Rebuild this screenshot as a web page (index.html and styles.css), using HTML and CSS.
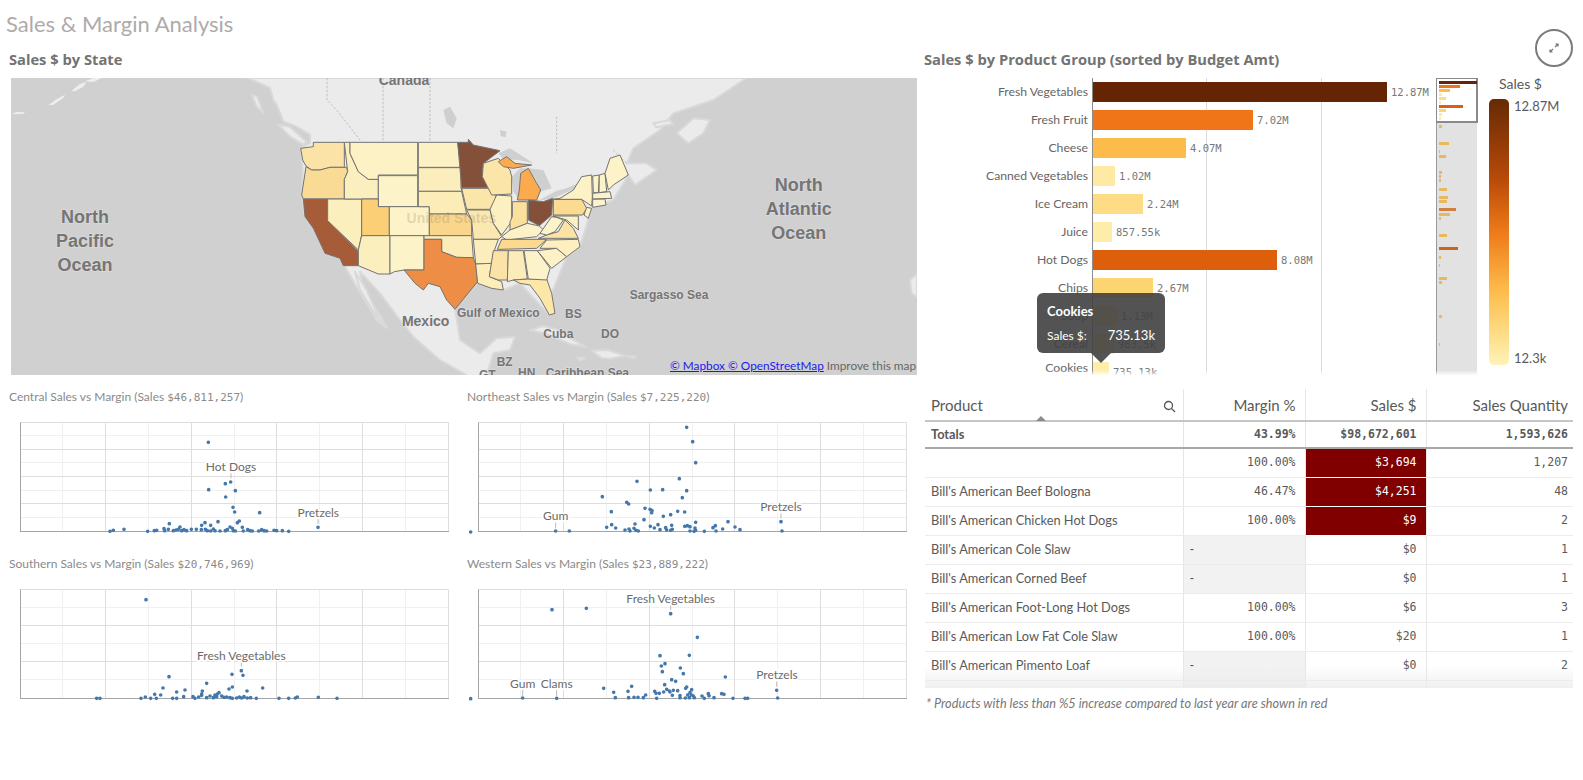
FILE: index.html
```html
<!DOCTYPE html>
<html lang="en">
<head>
    <meta charset="UTF-8">
    <title>Sales &amp; Margin Analysis</title>
    <link rel="stylesheet" href="styles.css">
</head>
<body>
<div class="page">
    <h1 class="sheet-title">Sales &amp; Margin Analysis</h1>

    <button class="expand-btn" aria-label="Expand">
        <svg width="12" height="12" viewBox="0 0 12 12"><path d="M7 5 10 2M7.5 2H10V4.5M5 7 2 10M2 7.5V10H4.5"/></svg>
    </button>

    <div class="dash">
        <!-- left column: map + scatter plots -->
        <section class="left">
            <h2 class="panel-title">Sales $ by State</h2>
            <div class="map">
                <svg class="map-svg" width="906" height="297" viewBox="-807 -126 2718 891">
                    <g class="land">
                        <path d="M-95-126-60-110-30-96-20-60-10-46 10 4 50 20 90 44 90 69 62 85 68 150 65 225 75 290 100 325 135 400 180 415 195 440 230 500 290 600 320 625 300 585 250 510 240 455 300 520 360 600 400 650 480 720 560 765 560 800 620 800 620 765 640 700 690 690 705 650 650 655 600 700 540 660 525 565 593 490 670 510 720 490 808 585 825 580 815 520 860 410 900 380 935 265 1000 240 1045 165 1065 195 1130 150 1100 130 1040 130 1060 85 1140 30 1180-20 1300-60 1400-126Z"/>
                        <path d="M1190 40 1240-5 1290 0 1270 40 1225 70Z"/>
                        <path d="M1120 10 1170 0 1180 12 1130 22Z"/>
                        <path d="M750 630 790 618 830 628 880 660 920 682 870 672 800 642Z"/>
                        <path d="M935 692 985 690 1035 708 990 716 965 714Z"/>
                        <path d="M890 712 915 714 900 722Z"/>
                        <path d="M1040 708 1068 708 1060 716Z"/>
                        <path d="M225 455 260 510 300 600 322 622 290 590 240 510Z"/>
                        <path d="M1890 480 1911 462 1911 530 1895 520Z"/>
                        <path d="M-85-76-68-70-50-21-70-40Z"/>
                        <path d="M-5 14 30 20 80 66 70 74 30 50Z"/>
                    </g>
                    <g class="islands">
                        <path d="M-805-18-790-24-765-23-770-19-790-17Z"/>
                        <path d="M-695-44-670-62-645-76-650-66-680-46Z"/>
                        <path d="M-625-88-600-108-580-114-590-100-615-86Z"/>
                        <path d="M-585-116-560-126-535-126-560-114Z"/>
                    </g>
                    <g class="lakes">
                        <path d="M655 100 690 85 760 130 715 120 670 118Z"/>
                        <path d="M695 170 720 145 745 145 725 170 715 235 700 215Z"/>
                        <path d="M745 145 790 150 815 205 780 215 770 185Z"/>
                        <path d="M775 242 830 212 862 205 870 212 820 235Z"/>
                        <path d="M845 210 900 188 905 198 860 215Z"/>
                        <path d="M490-30 510-40 530-5 520 25 500 10Z"/>
                        <path d="M660 30 680 35 676 52 662 48Z"/>
                    </g>
                    <path class="borders" d="M141-126V-60L170-30 240 60V67M309-126V67M450-126V67M830-10V100M1000 90 1040 130"/>
                    <g class="states">
                        <path fill="#fbe3a8" d="M62 85 100 80V67H193V142H150L120 150H95L78 138 68 120Z"/>
                        <path fill="#fadb96" d="M78 140 95 150H120L150 142H200L203 155 193 178V237H70L65 225Z"/>
                        <path fill="#a65c38" d="M70 237H143V302L240 400 235 437H190L180 415 135 400 100 325 75 290Z"/>
                        <path fill="#fcefbe" d="M143 237H245V345L235 390 143 302Z"/>
                        <path fill="#fbefc0" d="M193 67H210V100L235 155 265 178H295V237H193V178L203 155Z"/>
                        <path fill="#fcf2c6" d="M210 67H413V165H295V178H265L235 155 210 100Z"/>
                        <path fill="#fdf3c8" d="M295 167H413V260H295Z"/>
                        <path fill="#fbcf76" d="M245 237H295V260H328V347H245Z"/>
                        <path fill="#fdf2c8" d="M328 260H448V347H328Z"/>
                        <path fill="#fcefbe" d="M235 390 245 347H330V462H295L235 437Z"/>
                        <path fill="#fdf3c8" d="M330 347H432V450H372L343 455 330 462Z"/>
                        <path fill="#fcf1c4" d="M415 67H533L543 142H415Z"/>
                        <path fill="#fbeebc" d="M415 143H543V205L547 214H415Z"/>
                        <path fill="#fbecb8" d="M415 214H545L560 282H448V260H415Z"/>
                        <path fill="#fad68c" d="M448 282H560L575 300V347H448Z"/>
                        <path fill="#fcedb8" d="M432 347H575L580 413 530 412 485 395V358H432Z"/>
                        <path fill="#ee8d45" d="M432 358H485V395L530 412 580 413 587 432 593 485 525 568 500 540 480 500 445 490 430 510 405 490 372 450H432Z"/>
                        <path fill="#85503a" d="M533 67H565V58L580 75 660 92 610 130 607 170 633 203H545Z"/>
                        <path fill="#fbe6aa" d="M545 205H633L650 235 630 268H560Z"/>
                        <path fill="#fbe7b0" d="M560 270H630L640 310 665 350 655 358H580L575 300Z"/>
                        <path fill="#fceebc" d="M580 358H655L640 400 635 430 587 432Z"/>
                        <path fill="#fcedb9" d="M587 432 635 430 628 470 665 485 670 510 635 505 593 490Z"/>
                        <path fill="#fbe5a8" d="M610 130 655 115 690 150 695 170V222L635 225 607 170Z"/>
                        <path fill="#fcefc0" d="M650 225 695 228V305L665 345 640 310 630 268Z"/>
                        <path fill="#fbaa4e" d="M722 160 745 145 770 190 782 210 770 240H712L718 210Z"/>
                        <path fill="#fbaa4e" d="M655 125 680 110 705 130 755 135 700 145 670 140Z"/>
                        <path fill="#fbdf9c" d="M697 245H742V310L690 330V305L697 290Z"/>
                        <path fill="#85503a" d="M745 240 790 245 818 235 815 285 778 317 745 300Z"/>
                        <path fill="#fdf2c6" d="M665 350 690 330 742 310 778 318 790 330 770 350 680 360Z"/>
                        <path fill="#fbd98e" d="M652 388 665 358H800L770 385 660 388Z"/>
                        <path fill="#fbe3a8" d="M640 392H685L682 480H655L628 470Z"/>
                        <path fill="#fcecba" d="M685 392H730L742 477 700 480 682 485Z"/>
                        <path fill="#fde7a8" d="M700 480 745 477H800L815 520 825 580 808 585 780 535 750 495 720 490Z"/>
                        <path fill="#fdf3ca" d="M732 392H772L810 445 800 480 745 477Z"/>
                        <path fill="#fdf1c5" d="M772 392 830 385 860 410 815 445Z"/>
                        <path fill="#fdefc0" d="M780 385 800 360 895 358 900 380 860 410 830 385Z"/>
                        <path fill="#fbe3a6" d="M775 355 800 345 835 335 855 300 880 325 895 355Z"/>
                        <path fill="#fdf3c8" d="M780 340 815 290 830 292 850 300 825 335 800 345Z"/>
                        <path fill="#fbda92" d="M820 238H905L920 265 908 285H820Z"/>
                        <path fill="#fdf2c6" d="M840 235 880 210 905 170 935 165 937 230 935 258 905 238H820Z"/>
                        <path fill="#fdf0c2" d="M818 288H895V330L860 300Z"/>
                        <path fill="#fdf0c2" d="M920 262 935 265 925 295 912 285Z"/>
                        <path fill="#fdf3c8" d="M938 168 958 165 955 218H940Z"/>
                        <path fill="#fdf3c8" d="M958 165 975 160 980 215 957 218Z"/>
                        <path fill="#fdf3c8" d="M975 160 990 115 1020 105 1045 165 1000 195 985 210Z"/>
                        <path fill="#fdf3c8" d="M938 220 990 215 995 235 938 237Z"/>
                        <path fill="#fdf3c8" d="M938 238 975 237 978 255 938 262Z"/>
                    </g>
                    <g class="map-labels">
                        <text class="lbl-md" x="372" y="-106">Canada</text>
                        <text class="lbl-lg" x="-585" y="309">North</text>
                        <text class="lbl-lg" x="-585" y="381">Pacific</text>
                        <text class="lbl-lg" x="-585" y="453">Ocean</text>
                        <text class="lbl-lg" x="1556" y="213">North</text>
                        <text class="lbl-lg" x="1556" y="285">Atlantic</text>
                        <text class="lbl-lg" x="1556" y="357">Ocean</text>
                        <text class="lbl-us" x="514" y="310">United States</text>
                        <text class="lbl-sm" x="655" y="590">Gulf of Mexico</text>
                        <text class="lbl-md" x="437" y="619">Mexico</text>
                        <text class="lbl-sm" x="880" y="593">BS</text>
                        <text class="lbl-sm" x="835" y="655">Cuba</text>
                        <text class="lbl-sm" x="990" y="654">DO</text>
                        <text class="lbl-sm" x="674" y="739">BZ</text>
                        <text class="lbl-sm" x="1167" y="537">Sargasso Sea</text>
                        <text class="lbl-sm" x="922" y="772">Caribbean Sea</text>
                        <text class="lbl-sm" x="740" y="772">HN</text>
                        <text class="lbl-sm" x="622" y="776">GT</text>
                    </g>
                </svg>
                <div class="attribution"><a href="#">&copy; Mapbox &copy; OpenStreetMap</a> Improve this map</div>
            </div>

            <div class="scatter-grid">
                <div class="scatter">
                    <h3>Central Sales vs Margin (Sales <span class="num">$46,811,257</span>)</h3>
                    <svg width="460" height="125" viewBox="0 99 1380 375">
                        <path class="grid-minor" d="M187.5 127V454M445.5 127V454M703.5 127V454M958.5 127V454M1216.5 127V454M61 166.5H1345M61 247.5H1345M61 331.5H1345M61 412.5H1345"/>
                        <path class="grid-major" d="M316.5 127V454M574.5 127V454M829.5 127V454M1087.5 127V454M1345.5 127V454M61 127.5H1345M61 208.5H1345M61 289.5H1345M61 370.5H1345"/>
                        <path class="axis" d="M61.5 127V456M60 454.5H1347"/>
                        <path class="dots" d="M625 187h0M692 306h0M676 311h0M626 329h0M706 332h0M677 351h0M699 382h0M704 396h0M779 398h0M954 442h0M654 425h0M718 423h0M712 428h0M615 428h0M605 436h0M632 436h0M508 431h0M372 448h0M340 451h0M330 454h0M443 454h0M463 452h0M470 451h0M492 446h0M494 452h0M505 448h0M520 452h0M528 450h0M535 448h0M540 441h0M545 452h0M552 449h0M560 452h0M574 448h0M589 448h0M604 449h0M616 448h0M622 452h0M632 453h0M640 447h0M645 452h0M660 453h0M676 452h0M682 449h0M690 441h0M697 445h0M700 452h0M706 453h0M727 442h0M730 453h0M743 449h0M750 452h0M757 453h0M776 453h0M785 449h0M792 452h0M800 453h0M822 451h0M830 452h0M847 452h0M866 454h0"/>
                        <path class="tick" d="M693 280V295M954 418V432"/>
                        <text class="pt-label" x="693" y="273">Hot Dogs</text>
                        <text class="pt-label" x="955" y="411">Pretzels</text>
                    </svg>
                </div>
                <div class="scatter">
                    <h3>Northeast Sales vs Margin (Sales <span class="num">$7,225,220</span>)</h3>
                    <svg width="460" height="125" viewBox="0 99 1380 375">
                        <path class="grid-minor" d="M181.5 127V454M439.5 127V454M697.5 127V454M952.5 127V454M1210.5 127V454M55 166.5H1339M55 247.5H1339M55 331.5H1339M55 412.5H1339"/>
                        <path class="grid-major" d="M310.5 127V454M568.5 127V454M823.5 127V454M1081.5 127V454M1339.5 127V454M55 127.5H1339M55 208.5H1339M55 289.5H1339M55 370.5H1339"/>
                        <path class="axis" d="M55.5 127V456M54 454.5H1341"/>
                        <path class="dots" d="M680 142h0M698 185h0M707 248h0M658 296h0M531 304h0M571 330h0M608 329h0M680 332h0M667 353h0M427 350h0M500 367h0M506 372h0M555 385h0M570 388h0M576 392h0M575 398h0M454 395h0M653 394h0M674 396h0M632 404h0M610 409h0M552 419h0M707 427h0M804 425h0M963 425h0M455 434h0M525 432h0M440 442h0M467 444h0M495 450h0M507 447h0M522 445h0M510 453h0M528 451h0M535 453h0M571 439h0M583 444h0M594 434h0M600 449h0M617 443h0M620 450h0M635 436h0M637 448h0M632 451h0M674 439h0M682 437h0M690 440h0M690 453h0M705 444h0M707 451h0M702 454h0M733 454h0M759 443h0M766 437h0M768 453h0M788 447h0M825 441h0M840 449h0M966 453h0M287 453h0M328 453h0M32 456h0"/>
                        <path class="tick" d="M287 428V445M963 400V415"/>
                        <text class="pt-label" x="287" y="420">Gum</text>
                        <text class="pt-label" x="963" y="393">Pretzels</text>
                    </svg>
                </div>
                <div class="scatter">
                    <h3>Southern Sales vs Margin (Sales <span class="num">$20,746,969</span>)</h3>
                    <svg width="460" height="125" viewBox="0 600 1380 375">
                        <path class="grid-minor" d="M187.5 628V955M445.5 628V955M703.5 628V955M958.5 628V955M1216.5 628V955M61 682.5H1345M61 790.5H1345M61 898.5H1345"/>
                        <path class="grid-major" d="M316.5 628V955M574.5 628V955M829.5 628V955M1087.5 628V955M1345.5 628V955M61 628.5H1345M61 736.5H1345M61 844.5H1345"/>
                        <path class="axis" d="M61.5 628V957M60 955.5H1347"/>
                        <path class="dots" d="M438 659h0M507 890h0M724 872h0M696 883h0M729 886h0M620 910h0M788 924h0M489 924h0M697 921h0M687 927h0M741 933h0M555 930h0M530 936h0M607 933h0M464 943h0M482 945h0M605 942h0M657 938h0M652 942h0M645 945h0M436 951h0M423 955h0M452 955h0M469 955h0M518 955h0M530 955h0M551 950h0M579 950h0M585 955h0M596 951h0M605 946h0M620 953h0M630 948h0M640 953h0M650 950h0M665 948h0M672 952h0M680 951h0M690 953h0M697 955h0M710 954h0M718 951h0M725 954h0M732 950h0M742 954h0M752 953h0M769 955h0M837 955h0M866 955h0M886 954h0M892 951h0M955 952h0M1011 955h0M290 955h0M300 955h0"/>
                        <path class="tick" d="M724 845V860"/>
                        <text class="pt-label" x="724" y="839">Fresh Vegetables</text>
                    </svg>
                </div>
                <div class="scatter">
                    <h3>Western Sales vs Margin (Sales <span class="num">$23,889,222</span>)</h3>
                    <svg width="460" height="125" viewBox="0 600 1380 375">
                        <path class="grid-minor" d="M181.5 628V955M439.5 628V955M697.5 628V955M952.5 628V955M1210.5 628V955M55 682.5H1339M55 790.5H1339M55 898.5H1339"/>
                        <path class="grid-major" d="M310.5 628V955M568.5 628V955M823.5 628V955M1081.5 628V955M1339.5 628V955M55 628.5H1339M55 736.5H1339M55 844.5H1339"/>
                        <path class="axis" d="M55.5 628V957M54 955.5H1341"/>
                        <path class="dots" d="M276 689h0M379 685h0M632 701h0M712 772h0M600 827h0M688 826h0M604 858h0M615 851h0M661 864h0M607 875h0M670 881h0M796 891h0M635 899h0M647 904h0M431 925h0M515 919h0M614 914h0M461 937h0M504 934h0M680 921h0M677 925h0M695 929h0M620 928h0M628 933h0M640 931h0M630 936h0M653 932h0M584 934h0M588 940h0M598 940h0M611 936h0M690 938h0M745 941h0M785 941h0M792 943h0M637 946h0M660 947h0M683 945h0M695 945h0M700 948h0M726 948h0M747 947h0M950 931h0M466 953h0M506 953h0M522 952h0M534 952h0M550 953h0M557 945h0M590 955h0M660 953h0M676 954h0M688 953h0M703 953h0M733 955h0M762 953h0M819 955h0M855 955h0M863 955h0M953 954h0M188 954h0M290 955h0M32 956h0"/>
                        <path class="tick" d="M632 675V690M188 930V948M290 930V948M950 905V920"/>
                        <text class="pt-label" x="632" y="669">Fresh Vegetables</text>
                        <text class="pt-label" x="188" y="924">Gum</text>
                        <text class="pt-label" x="290" y="924">Clams</text>
                        <text class="pt-label" x="951" y="897">Pretzels</text>
                    </svg>
                </div>
            </div>
        </section>

        <!-- right column: bar chart + table -->
        <section class="right">
            <h2 class="panel-title">Sales $ by Product Group (sorted by Budget Amt)</h2>
            <div class="chart">
                <div class="bars">
                    <div class="bar-row"><span class="bar-label">Fresh Vegetables</span><i class="bar" style="width:294px;background:#652505"></i><span class="bar-val">12.87M</span></div>
                    <div class="bar-row"><span class="bar-label">Fresh Fruit</span><i class="bar" style="width:160px;background:#ef7518"></i><span class="bar-val">7.02M</span></div>
                    <div class="bar-row"><span class="bar-label">Cheese</span><i class="bar" style="width:93px;background:#fdbb4b"></i><span class="bar-val">4.07M</span></div>
                    <div class="bar-row"><span class="bar-label">Canned Vegetables</span><i class="bar" style="width:22px;background:#feeaa5"></i><span class="bar-val">1.02M</span></div>
                    <div class="bar-row"><span class="bar-label">Ice Cream</span><i class="bar" style="width:50px;background:#fedc85"></i><span class="bar-val">2.24M</span></div>
                    <div class="bar-row"><span class="bar-label">Juice</span><i class="bar" style="width:19px;background:#feeda8"></i><span class="bar-val">857.55k</span></div>
                    <div class="bar-row"><span class="bar-label">Hot Dogs</span><i class="bar" style="width:184px;background:#de5f0b"></i><span class="bar-val">8.08M</span></div>
                    <div class="bar-row"><span class="bar-label">Chips</span><i class="bar" style="width:60px;background:#fdd472"></i><span class="bar-val">2.67M</span></div>
                    <div class="bar-row"><span class="bar-label">Soup</span><i class="bar" style="width:24px;background:#fee79e"></i><span class="bar-val">1.13M</span></div>
                    <div class="bar-row"><span class="bar-label">Cereal</span><i class="bar" style="width:21px;background:#feeaa5"></i><span class="bar-val">983.5k</span></div>
                    <div class="bar-row"><span class="bar-label bar-label-cut">Cookies</span><i class="bar" style="width:16px;background:#feeeac"></i><span class="bar-val">735.13k</span></div>
                </div>

                <svg class="minimap" width="42" height="297" viewBox="0 0 42 297">
                    <rect x="1" width="40" height="297" fill="#e2e2e2"/>
                    <path d="M.5 0V297" stroke="#999"/>
                    <g fill="#e8b85f">
                        <rect x="3" y="47" width="3" height="3"/><rect x="3" y="64" width="10" height="3"/><rect x="3" y="72" width="1" height="3"/><rect x="3" y="77" width="7" height="3"/>
                        <rect x="3" y="93" width="3" height="3"/><rect x="3" y="97" width="2" height="3"/><rect x="3" y="101" width="2" height="3"/><rect x="3" y="110" width="8" height="3"/>
                        <rect x="3" y="118" width="9" height="3"/><rect x="3" y="122" width="8" height="3"/><rect x="3" y="135" width="11" height="3"/><rect x="3" y="139" width="2" height="3"/>
                        <rect x="3" y="156" width="8" height="3"/><rect x="3" y="178" width="2" height="3"/><rect x="3" y="186" width="1" height="3"/><rect x="3" y="199" width="8" height="3"/>
                        <rect x="3" y="203" width="3" height="3"/><rect x="3" y="237" width="3" height="3"/><rect x="3" y="265" width="1" height="3"/>
                    </g>
                    <rect x="3" y="130" width="17" height="3" fill="#d08040"/>
                    <rect x="3" y="169" width="19" height="3" fill="#c9651c"/>
                    <rect class="mini-window" x="0" y="0" width="41" height="44"/>
                    <rect x="3" y="3" width="38" height="3" fill="#652505"/>
                    <rect x="3" y="7" width="21" height="3" fill="#ef7518"/>
                    <rect x="3" y="11" width="11" height="3" fill="#fdbb4b"/>
                    <rect x="3" y="15" width="3" height="3" fill="#feeaa5"/>
                    <rect x="3" y="19" width="7" height="3" fill="#fedc85"/>
                    <rect x="3" y="23" width="2" height="3" fill="#feeda8"/>
                    <rect x="3" y="27" width="24" height="3" fill="#de5f0b"/>
                    <rect x="3" y="31" width="7" height="3" fill="#fdd472"/>
                    <rect x="3" y="35" width="3" height="3" fill="#fee79e"/>
                    <rect x="3" y="39" width="2" height="3" fill="#feeaa5"/>
                </svg>

                <div class="legend">
                    <div class="legend-title">Sales $</div>
                    <div class="legend-body">
                        <div class="legend-bar"></div>
                        <div class="legend-vals"><span>12.87M</span><span>12.3k</span></div>
                    </div>
                </div>

                <div class="tooltip">
                    <div class="tip-head">Cookies</div>
                    <div class="tip-row"><span>Sales $:</span><span class="tip-val">735.13k</span></div>
                </div>
            </div>

            <div class="table-wrap">
                <table class="sales-table">
                    <colgroup><col class="c1"><col class="c2"><col class="c3"><col class="c4"></colgroup>
                    <thead>
                        <tr>
                            <th class="th-product">Product
                                <svg class="search-ico" width="13" height="13" viewBox="0 0 13 13"><circle cx="5.5" cy="5.5" r="4"/><path d="M8.5 8.5 12 12"/></svg>
                                <i class="sort-arrow"></i>
                            </th>
                            <th>Margin %</th><th>Sales $</th><th>Sales Quantity</th>
                        </tr>
                        <tr class="totals"><td>Totals</td><td class="r">43.99%</td><td class="r">$98,672,601</td><td class="r">1,593,626</td></tr>
                    </thead>
                    <tbody>
                        <tr><td></td><td class="r">100.00%</td><td class="r red">$3,694</td><td class="r">1,207</td></tr>
                        <tr><td>Bill's American Beef Bologna</td><td class="r">46.47%</td><td class="r red">$4,251</td><td class="r">48</td></tr>
                        <tr><td>Bill's American Chicken Hot Dogs</td><td class="r">100.00%</td><td class="r red">$9</td><td class="r">2</td></tr>
                        <tr><td>Bill's American Cole Slaw</td><td class="nil">-</td><td class="r">$0</td><td class="r">1</td></tr>
                        <tr><td>Bill's American Corned Beef</td><td class="nil">-</td><td class="r">$0</td><td class="r">1</td></tr>
                        <tr><td>Bill's American Foot-Long Hot Dogs</td><td class="r">100.00%</td><td class="r">$6</td><td class="r">3</td></tr>
                        <tr><td>Bill's American Low Fat Cole Slaw</td><td class="r">100.00%</td><td class="r">$20</td><td class="r">1</td></tr>
                        <tr><td>Bill's American Pimento Loaf</td><td class="nil">-</td><td class="r">$0</td><td class="r">2</td></tr>
                        <tr><td></td><td class="nil"></td><td></td><td></td></tr>
                    </tbody>
                </table>
            </div>
            <p class="footnote">* Products with less than %5 increase compared to last year are shown in red</p>
        </section>
    </div>
</div>
</body>
</html>
```

FILE: styles.css
```css
/* page */
body {
    margin: 0;
    background: #fff;
    color: #666;
    font-family: Lato, "Open Sans", sans-serif;
}

.page {
    position: relative;
    width: 1583px;
}

.sheet-title {
    margin: 0;
    height: 48px;
    padding-left: 6px;
    font-size: 22px;
    font-weight: 400;
    line-height: 48px;
    color: #aeabab;
}

.expand-btn {
    position: absolute;
    top: 29px;
    right: 10px;
    width: 38px;
    height: 38px;
    padding: 0;
    border: 2px solid #7b7b7b;
    border-radius: 50%;
    background: #fff;
    display: flex;
    align-items: center;
    justify-content: center;
}

.expand-btn path {
    fill: none;
    stroke: #777;
    stroke-width: 1.2;
}

.dash {
    display: grid;
    grid-template-columns: 920px 663px;
}

.panel-title {
    margin: 0;
    height: 30px;
    font-family: "Open Sans", Lato, sans-serif;
    font-size: 14.7px;
    font-weight: 700;
    line-height: 23px;
    color: #737373;
}

.left .panel-title { padding-left: 9px; }
.right .panel-title { padding-left: 4px; }

/* map */
.map {
    position: relative;
    margin-left: 11px;
    width: 906px;
    height: 297px;
    overflow: hidden;
    background: #d0d0d0;
}

.map-svg { display: block; }

.land path {
    fill: #ebebeb;
    stroke: #d9d9d9;
    stroke-width: 6;
    stroke-linejoin: round;
}

.islands path { fill: #eeeeee; }

.lakes path { fill: #cfcfcf; }

.borders {
    fill: none;
    stroke: #b5b5b5;
    stroke-width: 2.5;
    stroke-dasharray: 7 5;
}

.states path {
    stroke: #737373;
    stroke-width: 3;
    stroke-linejoin: round;
}

.map-labels text {
    font-family: "Liberation Sans", Arial, sans-serif;
    font-weight: 700;
    fill: #757575;
    text-anchor: middle;
    paint-order: stroke;
    stroke: rgba(235, 235, 235, 0.45);
    stroke-width: 4;
}

.lbl-lg { font-size: 54px; }
.lbl-md { font-size: 42px; }
.lbl-sm { font-size: 36px; }

.map-labels .lbl-us {
    font-size: 42px;
    fill: rgba(120, 110, 80, 0.22);
    stroke: none;
}

.attribution {
    position: absolute;
    left: 659px;
    bottom: 1px;
    font-size: 11.8px;
    line-height: 16px;
    white-space: nowrap;
    color: #666;
}

.attribution a { color: #1a1aee; }

/* scatter plots */
.scatter-grid {
    display: grid;
    grid-template-columns: 460px 460px;
    row-gap: 14px;
    margin-top: 10px;
}

.scatter h3 {
    margin: 0 0 4px;
    padding-left: 9px;
    height: 24px;
    font-size: 12px;
    font-weight: 400;
    line-height: 24px;
    color: #8a8a8a;
}

.scatter:nth-child(even) h3 { padding-left: 7px; }

.scatter svg { display: block; }

.num {
    font-family: "DejaVu Sans Mono", monospace;
    font-size: 11px;
}

.grid-minor { stroke: #f0f0f0; stroke-width: 3; fill: none; }
.grid-major { stroke: #dedede; stroke-width: 3; fill: none; }
.axis { stroke: #a5a5a5; stroke-width: 3; fill: none; }
.dots { stroke: #4477aa; stroke-width: 11; stroke-linecap: round; fill: none; }
.tick { stroke: #bbb; stroke-width: 3; fill: none; }

.pt-label {
    font-size: 36px;
    fill: #6b6b6b;
    text-anchor: middle;
    paint-order: stroke;
    stroke: #fff;
    stroke-width: 10;
}

/* bar chart */
.chart {
    position: relative;
    display: flex;
    height: 297px;
    overflow: hidden;
}

.chart::after {
    content: "";
    position: absolute;
    left: 0;
    right: 106px;
    bottom: 0;
    height: 5px;
    background: linear-gradient(rgba(255, 255, 255, 0), rgba(255, 255, 255, 0.85));
}

.bars {
    width: 516px;
    flex: none;
    background:
        linear-gradient(#8c8c8c, #8c8c8c) 172px 0 / 1px 100% no-repeat,
        linear-gradient(#dcdcdc, #dcdcdc) 286px 0 / 1px 100% no-repeat,
        linear-gradient(#dcdcdc, #dcdcdc) 401px 0 / 1px 100% no-repeat;
}

.bar-row {
    display: flex;
    align-items: center;
    height: 28px;
}

.bar-label {
    width: 168px;
    padding-right: 5px;
    text-align: right;
    font-size: 12.2px;
    line-height: 15px;
    position: relative;
    top: -1px;
    color: #666;
}

/* the last label is pushed up so it stays inside the clipped plot */
.bar-label-cut { top: -5px; }

.bar { display: block; height: 20px; }

.bar-val {
    margin-left: 4px;
    font-family: "DejaVu Sans Mono", monospace;
    font-size: 10.5px;
    color: #777;
}

.minimap { display: block; flex: none; }

.mini-window {
    fill: #fff;
    stroke: #8a8a8a;
    stroke-width: 2;
}

.legend {
    padding-left: 11px;
}

.legend-title {
    height: 21px;
    margin-left: 10px;
    font-size: 14px;
    line-height: 12px;
    color: #595959;
}

.legend-body {
    display: flex;
    height: 266px;
}

.legend-bar {
    width: 20px;
    border-radius: 5px;
    background: linear-gradient(#662a05, #b84a08 30%, #ee7a18 50%, #fdbb4b 72%, #fedc85 88%, #fff3b8);
}

.legend-vals {
    display: flex;
    flex-direction: column;
    justify-content: space-between;
    padding-left: 5px;
    font-size: 13px;
    line-height: 14px;
    color: #595959;
}

.tooltip {
    position: absolute;
    left: 117px;
    top: 215px;
    box-sizing: border-box;
    width: 128px;
    height: 60px;
    padding: 10px 10px 0;
    border-radius: 6px;
    background: rgba(64, 64, 64, 0.9);
    color: #fff;
    font-size: 12px;
}

.tooltip::after {
    content: "";
    position: absolute;
    left: 54px;
    top: 60px;
    border: 10px solid transparent;
    border-bottom: 0;
    border-top-color: rgba(64, 64, 64, 0.9);
}

.tip-head { font-size: 13px; font-weight: 700; line-height: 16px; }

.tip-row {
    display: flex;
    justify-content: space-between;
    align-items: baseline;
    margin-top: 8px;
    line-height: 16px;
}

.tip-val { font-size: 13px; }

/* table */
.table-wrap {
    position: relative;
    margin: 14px 0 0 5px;
    width: 648px;
    height: 299px;
    overflow: hidden;
}

.table-wrap::after {
    content: "";
    position: absolute;
    left: 0;
    right: 0;
    bottom: 0;
    height: 22px;
    background: linear-gradient(rgba(235, 235, 235, 0), rgba(235, 235, 235, 0.75));
}

.sales-table {
    width: 648px;
    table-layout: fixed;
    border-collapse: collapse;
    font-size: 12.8px;
    color: #595959;
}

.c1 { width: 258px; }
.c2 { width: 122px; }
.c3 { width: 121px; }
.c4 { width: 147px; }

.sales-table th,
.sales-table td {
    box-sizing: border-box;
    padding: 0 9px 0 6px;
    border-left: 1px solid #e6e6e6;
    white-space: nowrap;
}

.sales-table tr > :first-child { border-left: 0; }

.sales-table th {
    height: 32px;
    border-bottom: 2px solid #c6c6c6;
    text-align: right;
    font-size: 15px;
    font-weight: 400;
}

.sales-table .th-product {
    position: relative;
    text-align: left;
}

.search-ico {
    position: absolute;
    right: 7px;
    top: 11px;
    fill: none;
    stroke: #555;
    stroke-width: 1.3;
}

.sort-arrow {
    position: absolute;
    left: 111px;
    bottom: -1px;
    border: 5px solid transparent;
    border-top: 0;
    border-bottom-color: #8a8a8a;
}

.sales-table td {
    height: 29px;
    padding-bottom: 2px;
    border-bottom: 1px solid #ececec;
}

.sales-table .totals td {
    height: 27px;
    border-bottom: 2px solid #a8a8a8;
    font-weight: 700;
}

.r {
    text-align: right;
    font-family: "DejaVu Sans Mono", monospace;
    font-size: 11.5px;
}

.sales-table th:last-child,
.sales-table td:last-child { padding-right: 5px; }

.sales-table .red {
    background: #800000;
    color: #fff;
    border-bottom-color: #fff;
}

.sales-table .nil { background: #f2f2f2; }

.footnote {
    margin: 0;
    padding-left: 6px;
    height: 30px;
    font-size: 12.7px;
    font-style: italic;
    line-height: 30px;
    color: #777;
}
```
